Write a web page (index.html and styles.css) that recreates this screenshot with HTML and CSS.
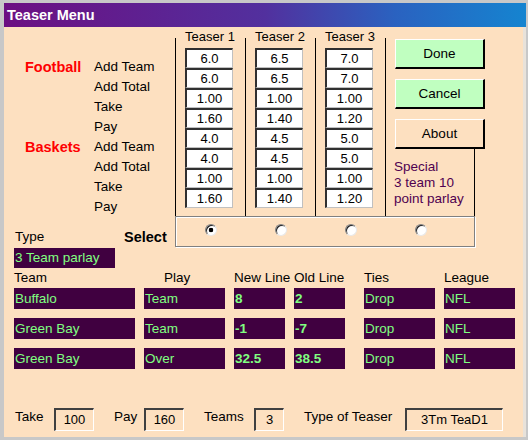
FILE: index.html
```html
<!DOCTYPE html>
<html lang="en">
<head>
  <meta charset="UTF-8">
  <title>Teaser Menu</title>
  <link rel="stylesheet" href="styles.css">
</head>
<body>
  <div class="window">
    <div class="titlebar">Teaser Menu</div>

    <div class="dialog">
      <div class="teasers">
        <div class="row-labels">
          <div class="sports">
            <span>Football</span>
            <span>Baskets</span>
          </div>
          <div class="names">
            <span>Add Team</span>
            <span>Add Total</span>
            <span>Take</span>
            <span>Pay</span>
            <span>Add Team</span>
            <span>Add Total</span>
            <span>Take</span>
            <span>Pay</span>
          </div>
        </div>

        <div class="teaser">
          <h3>Teaser 1</h3>
          <div class="entry">6.0</div>
          <div class="entry">6.0</div>
          <div class="entry">1.00</div>
          <div class="entry">1.60</div>
          <div class="entry">4.0</div>
          <div class="entry">4.0</div>
          <div class="entry">1.00</div>
          <div class="entry">1.60</div>
        </div>

        <div class="teaser">
          <h3>Teaser 2</h3>
          <div class="entry">6.5</div>
          <div class="entry">6.5</div>
          <div class="entry">1.00</div>
          <div class="entry">1.40</div>
          <div class="entry">4.5</div>
          <div class="entry">4.5</div>
          <div class="entry">1.00</div>
          <div class="entry">1.40</div>
        </div>

        <div class="teaser">
          <h3>Teaser 3</h3>
          <div class="entry">7.0</div>
          <div class="entry">7.0</div>
          <div class="entry">1.00</div>
          <div class="entry">1.20</div>
          <div class="entry">5.0</div>
          <div class="entry">5.0</div>
          <div class="entry">1.00</div>
          <div class="entry">1.20</div>
        </div>

        <div class="actions">
          <button class="btn" type="button">Done</button>
          <button class="btn" type="button">Cancel</button>
          <button class="btn plain" type="button">About</button>
          <div class="special">Special<br>3 team 10<br>point parlay</div>
        </div>
      </div>

      <div class="select-row">
        <span class="type-label">Type</span>
        <span class="select-label">Select</span>
        <div class="choices">
          <span class="radio on"></span>
          <span class="radio"></span>
          <span class="radio"></span>
          <span class="radio"></span>
        </div>
      </div>

      <div class="field parlay">3 Team parlay</div>

      <div class="lines">
        <span class="head">Team</span>
        <span class="head play">Play</span>
        <span class="head">New Line</span>
        <span class="head">Old Line</span>
        <span class="head">Ties</span>
        <span class="head">League</span>

        <div class="field">Buffalo</div>
        <div class="field">Team</div>
        <div class="field num">8</div>
        <div class="field num">2</div>
        <div class="field">Drop</div>
        <div class="field">NFL</div>

        <div class="field">Green Bay</div>
        <div class="field">Team</div>
        <div class="field num">-1</div>
        <div class="field num">-7</div>
        <div class="field">Drop</div>
        <div class="field">NFL</div>

        <div class="field">Green Bay</div>
        <div class="field">Over</div>
        <div class="field num">32.5</div>
        <div class="field num">38.5</div>
        <div class="field">Drop</div>
        <div class="field">NFL</div>
      </div>

      <div class="totals">
        <span class="total-label">Take</span>
        <div class="readout w40">100</div>
        <span class="total-label">Pay</span>
        <div class="readout w40">160</div>
        <span class="total-label">Teams</span>
        <div class="readout w30">3</div>
        <span class="total-label">Type of Teaser</span>
        <div class="readout w98">3Tm TeaD1</div>
      </div>
    </div>
  </div>
</body>
</html>
```

FILE: styles.css
```css
* {
  box-sizing: border-box;
}

body {
  margin: 0;
  font-family: "Liberation Sans", Arial, sans-serif;
  font-size: 13.5px;
  color: #000;
}

.window {
  width: 528px;
  height: 440px;
  display: flex;
  flex-direction: column;
  border-style: solid;
  border-color: #c8c8c8;
  border-width: 3px 2px 3px 4px;
  background: #fde0c0;
}

.titlebar {
  height: 24px;
  line-height: 24px;
  padding-left: 3px;
  color: #fff;
  font-weight: bold;
  font-size: 14.5px;
  background: linear-gradient(to right, #6c0f82 0%, #52309e 50%, #2a62c0 75%, #1584d0 100%);
}

.dialog {
  flex: 1;
  border-right: 3px solid #e8e2da;
}

/* teaser grid */

.teasers {
  display: grid;
  grid-template-columns: 171px 70px 70px 70px 1fr;
  height: 181px;
}

.row-labels {
  display: flex;
  padding: 30px 0 0 21px;
}

.sports {
  width: 69px;
  display: flex;
  flex-direction: column;
  gap: 60px;
  color: #f00;
  font-weight: bold;
  font-size: 14.5px;
  line-height: 20px;
}

.names {
  display: flex;
  flex-direction: column;
  line-height: 20px;
}

.teaser {
  margin-top: 11px;
  border-left: 1px solid #000;
  padding-left: 9px;
}

.teaser h3 {
  margin: -10px 0 0;
  width: 48px;
  height: 20px;
  font-size: 13px;
  font-weight: normal;
  line-height: 18px;
  text-align: center;
  white-space: nowrap;
}

.entry {
  width: 48px;
  height: 20px;
  background: #fff;
  border-style: solid;
  border-width: 2px 1px 1px 2px;
  border-color: #303030 #c0c0c0 #c0c0c0 #303030;
  font-size: 13px;
  line-height: 17px;
  text-align: center;
}

.actions {
  margin-top: 11px;
  border-left: 1px solid #000;
  padding: 1px 0 0 9px;
  display: flex;
  flex-direction: column;
  gap: 10px;
}

.btn {
  width: 90px;
  height: 30px;
  padding: 0;
  font: inherit;
  color: #000;
  background: #c0ffc0;
  border-style: solid;
  border-width: 1px 2px 2px 1px;
  border-color: #fff #000 #000 #fff;
}

.btn.plain {
  background: #fde0c0;
}

.special {
  flex: 1;
  width: 81px;
  margin: -10px 0 0 -1px;
  padding-top: 10px;
  border-right: 1px solid #000;
  color: #500050;
  line-height: 16px;
}

/* type selector */

.select-row {
  display: grid;
  grid-template-columns: 109px 51px 300px;
  height: 31px;
  margin: 8px 0 0 11px;
}

.type-label,
.select-label {
  align-self: end;
  line-height: 20px;
}

.select-label {
  font-weight: bold;
  font-size: 14.5px;
}

.choices {
  display: grid;
  grid-template-columns: repeat(4, 70px);
  justify-items: center;
  align-items: start;
  padding-top: 7px;
  border: 1px solid #808080;
  box-shadow: inset 1px 1px 0 #fff, 1px 1px 0 #fff;
}

.radio {
  width: 12px;
  height: 12px;
  border-radius: 50%;
  background: #fff;
  border: 1px solid;
  border-color: #808080 #e8e8e8 #e8e8e8 #808080;
  box-shadow: inset 1px 1px 0 #202020;
}

.radio.on {
  background: radial-gradient(circle, #000 0 2px, #fff 2.6px);
}

/* bet lines */

.field {
  height: 21px;
  padding-left: 1px;
  background: #400040;
  color: #80ff80;
  line-height: 21px;
  white-space: nowrap;
}

.parlay {
  width: 101px;
  height: 20px;
  line-height: 20px;
  margin: 1px 0 0 10px;
}

.lines {
  display: grid;
  grid-template-columns: 130px 90px 60px 70px 80px 71px;
  margin-left: 10px;
}

.lines .head {
  line-height: 20px;
  white-space: nowrap;
}

.lines .head.play {
  padding-left: 20px;
}

.lines .field {
  margin: 0 9px 9px 0;
}

.lines .field:nth-child(6n+4) {
  margin-right: 19px;
}

.lines .field:nth-child(6n) {
  margin-right: 0;
}

.field.num {
  font-weight: bold;
}

/* totals */

.totals {
  display: grid;
  grid-template-columns: 39px 60px 30px 60px 50px 50px 101px 98px;
  margin: 30px 0 0 11px;
}

.total-label {
  line-height: 17px;
  white-space: nowrap;
}

.readout {
  height: 23px;
  border-style: solid;
  border-width: 2px 1px 1px 2px;
  border-color: #404040 #fff #fff #404040;
  font-size: 13px;
  line-height: 20px;
  text-align: center;
}

.w40 { width: 40px; }
.w30 { width: 30px; }
.w98 { width: 98px; }
```
